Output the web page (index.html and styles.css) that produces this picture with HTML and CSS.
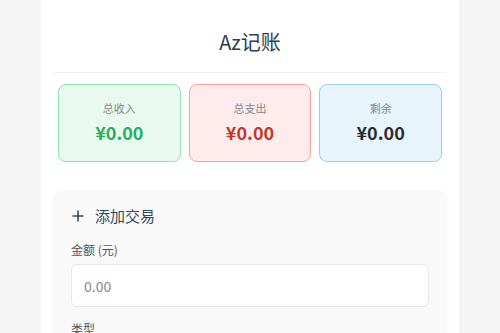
FILE: index.html
```html
<!DOCTYPE html>
<html>
<head>
    <title>Az记账</title>
    <link rel="stylesheet" href="styles.css">
</head>
<body>
    <div class="container">
        <header class="header">
            <h1>Az记账</h1>
        </header>

        <div class="summary">
            <div class="card income">
                <div class="card-label">总收入</div>
                <div class="card-value">¥0.00</div>
            </div>
            <div class="card expense">
                <div class="card-label">总支出</div>
                <div class="card-value">¥0.00</div>
            </div>
            <div class="card balance">
                <div class="card-label">剩余</div>
                <div class="card-value">¥0.00</div>
            </div>
        </div>

        <section class="form-section">
            <h2 class="form-title">
                <svg width="12" height="12" viewBox="0 0 12 12">
                    <path d="M6 0.5V11.5M0.5 6H11.5" stroke="#34495e" stroke-width="1.6" fill="none"/>
                </svg>
                添加交易
            </h2>
            <div class="field">
                <label for="amount">金额 (元)</label>
                <input type="number" id="amount" placeholder="0.00">
            </div>
            <div class="field">
                <label for="type">类型</label>
                <select id="type">
                    <option>支出</option>
                    <option>收入</option>
                </select>
            </div>
        </section>
    </div>
</body>
</html>
```

FILE: styles.css
```css
html, body {
    margin: 0;
    height: 100%;
    overflow: hidden;
}

body {
    background: #f5f5f5;
    font-family: "Noto Sans CJK SC", "Noto Sans", sans-serif;
    color: #333;
}

.container {
    width: 392px;
    margin: 0 auto;
    padding: 0 13px;
    background: #fff;
    min-height: 100%;
}

.header {
    padding: 28px 0 16px;
    border-bottom: 1px solid #f0f0f0;
    text-align: center;
}

.header h1 {
    margin: 0;
    font-size: 20px;
    line-height: 28px;
    font-weight: 400;
    color: #2c3e50;
}

.summary {
    display: grid;
    grid-template-columns: repeat(3, 1fr);
    gap: 8px;
    margin: 11px 4px 0;
}

.card {
    border: 1px solid;
    border-radius: 8px;
    padding: 15px 8px 14px;
    text-align: center;
}

.card-label {
    font-size: 11px;
    line-height: 16px;
    color: #888;
}

.card-value {
    margin-top: 1px;
    font-size: 18px;
    line-height: 30px;
    font-weight: 700;
}

.income {
    background: #e9f9ef;
    border-color: #8fe3b0;
}

.income .card-value {
    color: #27ae60;
}

.expense {
    background: #fdeceb;
    border-color: #f3a39c;
}

.expense .card-value {
    color: #c0392b;
}

.balance {
    background: #e8f4fc;
    border-color: #9dcdf1;
}

.balance .card-value {
    color: #2c2c2c;
}

.form-section {
    margin-top: 28px;
    padding: 16px 17px 17px;
    background: #f9f9f9;
    border-radius: 10px;
    box-shadow: 0 1px 6px rgba(0, 0, 0, 0.04);
}

.form-title {
    display: flex;
    align-items: center;
    gap: 11px;
    margin: 0 0 15px 1px;
    font-size: 15px;
    line-height: 20px;
    font-weight: 400;
    color: #34495e;
}

.field {
    margin-bottom: 13px;
}

.field label {
    display: block;
    font-size: 12px;
    line-height: 18px;
    color: #555;
    margin-bottom: 5px;
}

.field input,
.field select {
    box-sizing: border-box;
    width: 100%;
    height: 43px;
    padding: 0 12px;
    border: 1px solid #e8e8e8;
    border-radius: 6px;
    background: #fff;
    font-family: inherit;
    font-size: 14px;
    color: #333;
}

.field input::placeholder {
    color: #888;
}
```
